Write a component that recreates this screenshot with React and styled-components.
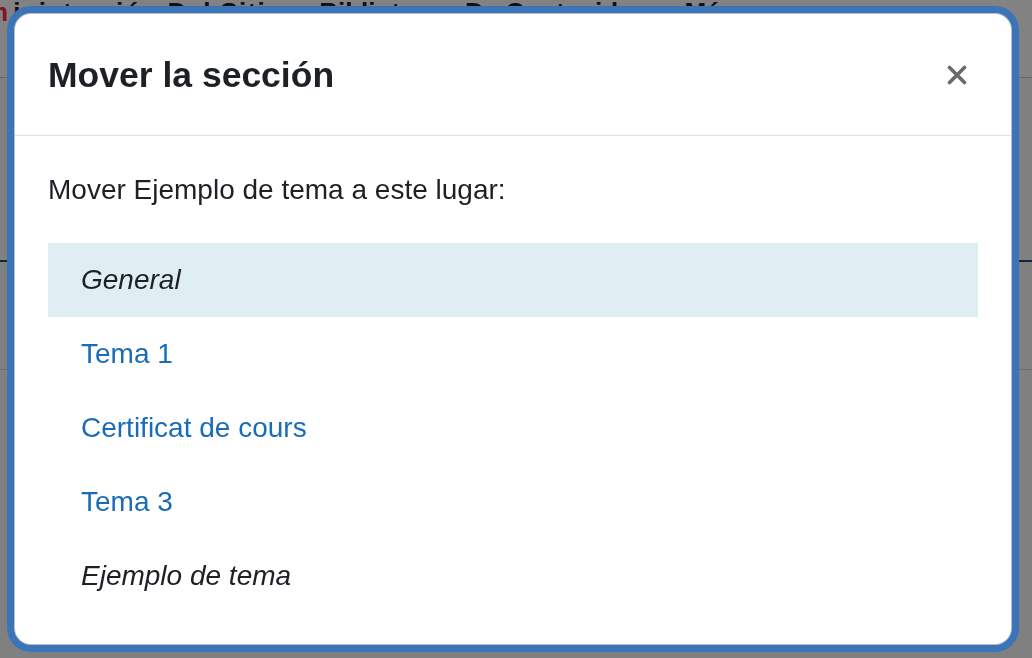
import React from "react";
import styled, { createGlobalStyle } from "styled-components";

const Global = createGlobalStyle`
  html, body { margin: 0; padding: 0; }
  body {
    width: 1032px;
    height: 658px;
    overflow: hidden;
    font-family: "Liberation Sans", Arial, sans-serif;
    background: #ffffff;
  }
`;

const Page = styled.div`
  width: 1032px;
  height: 658px;
  display: flex;
  flex-direction: column;
  background: #fbfbfb;
`;

const NavBar = styled.nav`
  height: 78px;
  box-sizing: border-box;
  border-bottom: 1px solid #c8c8c8;
  display: flex;
  align-items: flex-start;
  gap: 36px;
  margin-left: -15px;
  font-weight: 700;
  font-size: 26px;
  line-height: 26px;
  color: #1d2125;
  background: #ffffff;
`;

const NavItem = styled.span`
  margin-top: -1px;
  white-space: nowrap;
  letter-spacing: ${(p) => (p.$spaced ? "1.3px" : "0")};
  & > em {
    font-style: normal;
    color: #ff2c4c;
    margin-right: 5px;
    letter-spacing: 0;
  }
`;

const PageSection = styled.div`
  height: 184px;
  box-sizing: border-box;
  border-bottom: 2px solid #2a4e78;
`;

const PageSection2 = styled.div`
  height: 108px;
  box-sizing: border-box;
  border-bottom: 1px solid #d6d6d6;
`;

const Backdrop = styled.div`
  position: fixed;
  inset: 0;
  background: rgba(0, 0, 0, 0.49);
  display: flex;
  align-items: flex-start;
  padding: 13px 0 0 14px;
`;

const Modal = styled.div`
  width: 998px;
  height: 632px;
  box-sizing: border-box;
  background: #ffffff;
  border: 1px solid rgba(0, 0, 0, 0.25);
  border-radius: 17px;
  box-shadow: 0 0 0 7px #3b75b9;
  display: flex;
  flex-direction: column;
  overflow: hidden;
  font-family: "Liberation Sans", Arial, sans-serif;
`;

const Header = styled.div`
  height: 121px;
  flex: none;
  display: flex;
  align-items: center;
  justify-content: space-between;
  padding: 0 43px 0 33px;
  border-bottom: 1px solid #dee2e6;
`;

const Title = styled.h5`
  margin: 0;
  font-size: 35.5px;
  line-height: 42px;
  font-weight: 700;
  color: #1d2125;
`;

const CloseButton = styled.button`
  border: none;
  background: transparent;
  padding: 0;
  width: 22px;
  height: 22px;
  display: flex;
  align-items: center;
  justify-content: center;
  cursor: pointer;
  margin-top: 1px;
`;

const Body = styled.div`
  padding: 36px 33px 31px 33px;
  display: flex;
  flex-direction: column;
`;

const Intro = styled.p`
  margin: 0 0 35px 0;
  font-size: 28px;
  line-height: 36px;
  color: #1d2125;
`;

const List = styled.ul`
  list-style: none;
  margin: 0;
  padding: 0;
  display: flex;
  flex-direction: column;
`;

const Row = styled.li`
  height: 74px;
  display: flex;
  align-items: center;
  padding-left: 33px;
  background: ${(p) => (p.$current ? "#dfeef2" : "transparent")};
  font-size: 28px;
  font-style: ${(p) => (p.$link ? "normal" : "italic")};
  color: ${(p) => (p.$link ? "#1a6cb8" : "#1d2125")};
`;

const sections = [
  { name: "General", current: true, link: false },
  { name: "Tema 1", link: true },
  { name: "Certificat de cours", link: true },
  { name: "Tema 3", link: true },
  { name: "Ejemplo de tema", link: false },
];

export default function App() {
  return (
    <>
      <Global />
      <Page>
        <NavBar>
          <NavItem $spaced>
            <em>m</em>inistración Del Sitio
          </NavItem>
          <NavItem>Bibliotecas De Contenidos</NavItem>
          <NavItem>Más</NavItem>
        </NavBar>
        <PageSection />
        <PageSection2 />
      </Page>
      <Backdrop>
        <Modal role="dialog" aria-label="Mover la sección">
          <Header>
            <Title>Mover la sección</Title>
            <CloseButton aria-label="Cerrar">
              <svg width="20" height="20" viewBox="0 0 20 20">
                <path
                  d="M2.5 2.5 L17.5 17.5 M17.5 2.5 L2.5 17.5"
                  stroke="#6a6a6a"
                  strokeWidth="3.6"
                  strokeLinecap="round"
                />
              </svg>
            </CloseButton>
          </Header>
          <Body>
            <Intro>Mover Ejemplo de tema a este lugar:</Intro>
            <List>
              {sections.map((s) => (
                <Row key={s.name} $current={s.current} $link={s.link}>
                  {s.name}
                </Row>
              ))}
            </List>
          </Body>
        </Modal>
      </Backdrop>
    </>
  );
}
